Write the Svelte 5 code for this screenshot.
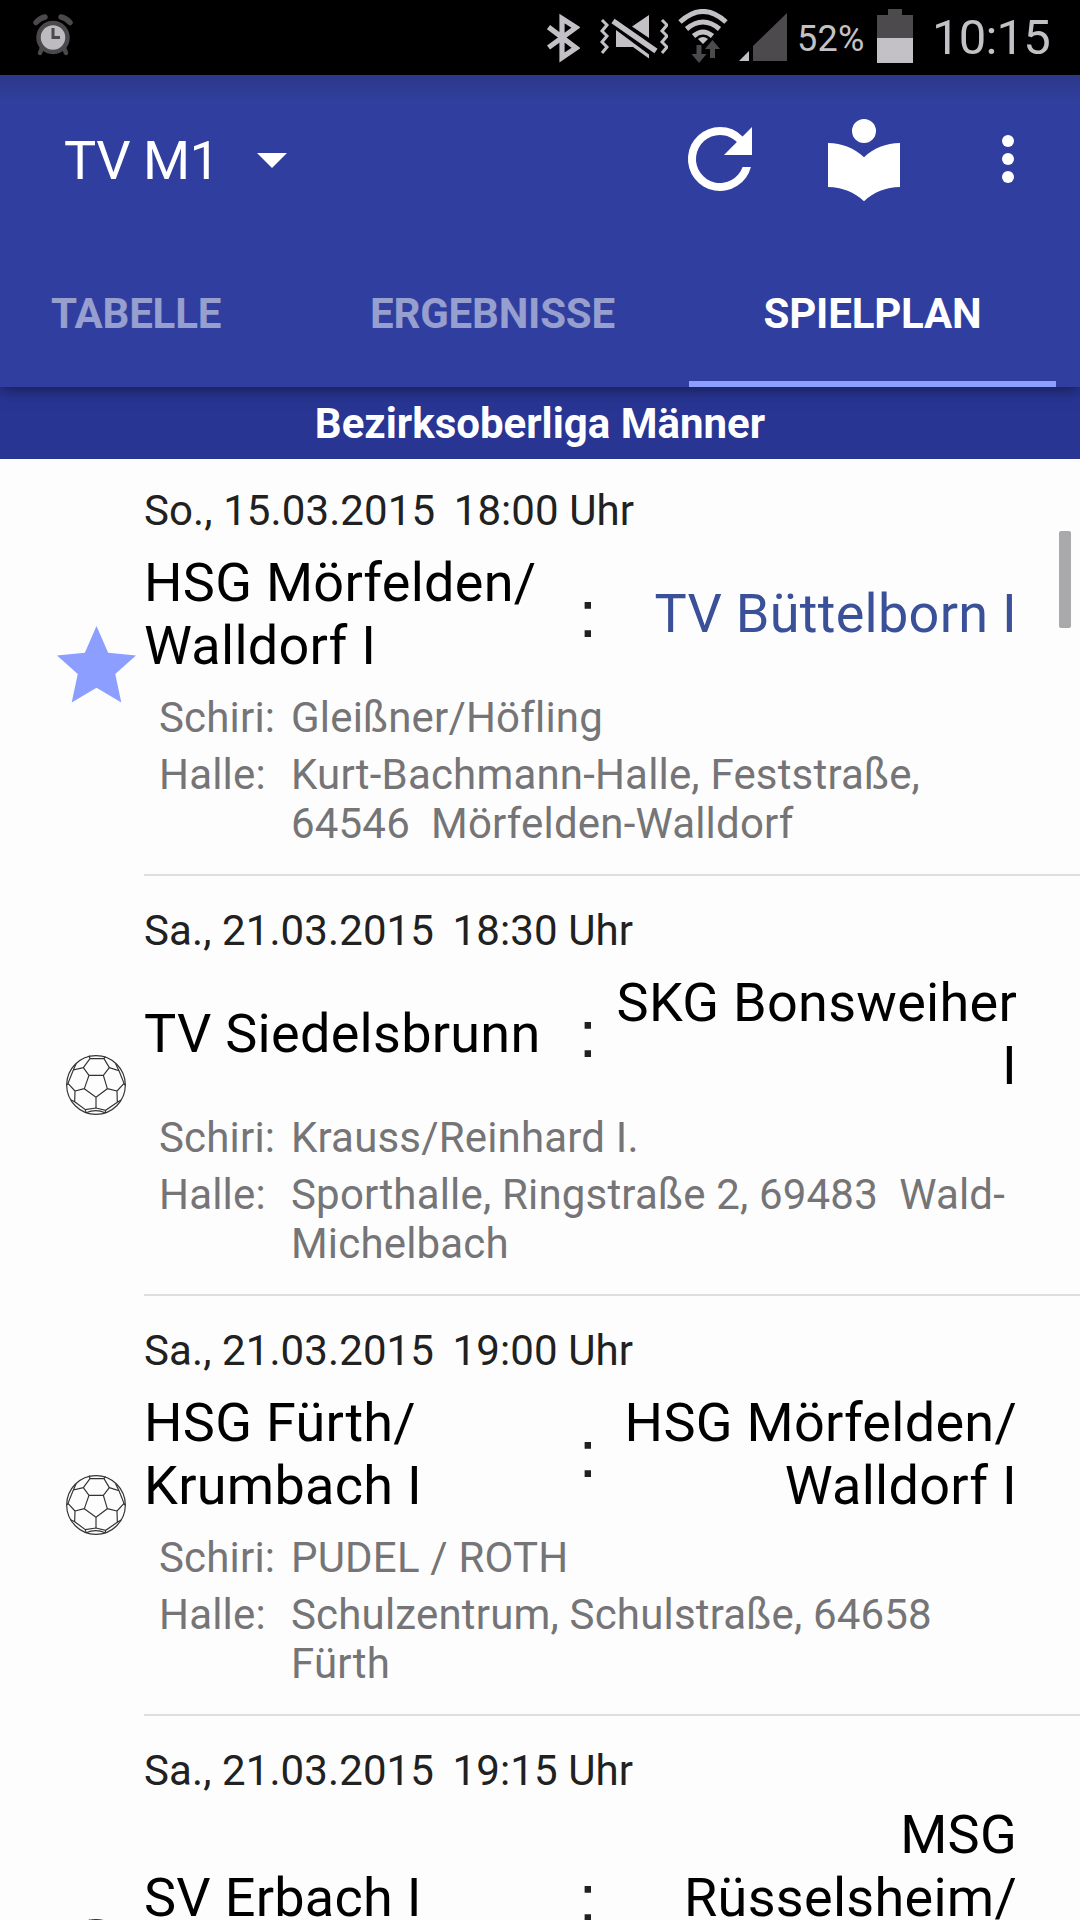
<script lang="ts">
  interface Game {
    kind: 'star' | 'ball';
    date: string;
    time: string;
    home: string[];
    guest: string[];
    own?: boolean;
    referee: string;
    hall: string[];
  }

  const tabs = ['TABELLE', 'ERGEBNISSE', 'SPIELPLAN'];
  let active = $state('SPIELPLAN');

  const games: Game[] = [
    {
      kind: 'star',
      date: 'So., 15.03.2015',
      time: '18:00 Uhr',
      home: ['HSG Mörfelden/', 'Walldorf I'],
      guest: ['TV Büttelborn I'],
      own: true,
      referee: 'Gleißner/Höfling',
      hall: ['Kurt-Bachmann-Halle, Feststraße,', '64546  Mörfelden-Walldorf']
    },
    {
      kind: 'ball',
      date: 'Sa., 21.03.2015',
      time: '18:30 Uhr',
      home: ['TV Siedelsbrunn'],
      guest: ['SKG Bonsweiher', 'I'],
      referee: 'Krauss/Reinhard I.',
      hall: ['Sporthalle, Ringstraße 2, 69483  Wald-', 'Michelbach']
    },
    {
      kind: 'ball',
      date: 'Sa., 21.03.2015',
      time: '19:00 Uhr',
      home: ['HSG Fürth/', 'Krumbach I'],
      guest: ['HSG Mörfelden/', 'Walldorf I'],
      referee: 'PUDEL / ROTH',
      hall: ['Schulzentrum, Schulstraße, 64658', 'Fürth']
    },
    {
      kind: 'ball',
      date: 'Sa., 21.03.2015',
      time: '19:15 Uhr',
      home: ['SV Erbach I'],
      guest: ['MSG', 'Rüsselsheim/', 'Bauschheim I'],
      referee: '',
      hall: []
    }
  ];
</script>

<div class="screen">
  <div class="status">
    <svg class="alarm" width="40" height="42" viewBox="0 0 40 42">
      <g stroke="#4b494c" stroke-linecap="round" fill="none">
        <path d="M3 8.500 Q7 4 12 3M37 8.500 Q33 4 28 3" stroke-width="5.500" />
        <path d="M9 34 L7 39M31 34 L33 39" stroke-width="4.500" />
      </g>
      <circle cx="20" cy="23.500" r="14.500" fill="#bdbbbf" stroke="#4b494c" stroke-width="4.500" />
      <path d="M20 14v9.500h7" fill="none" stroke="#4b494c" stroke-width="3" />
    </svg>
    <div class="status-icons">
      <svg width="33" height="50" viewBox="0 0 33 50">
        <path d="M1.500 14 L29 35 L15 44.500 V5.500 L29 14.500 L1.500 34.500" fill="none" stroke="#c3c1c5" stroke-width="5.200" />
      </svg>
      <svg class="mute" width="68" height="50" viewBox="0 0 68 50">
        <g fill="none" stroke="#c3c1c5">
          <path d="M2 7l5 5-5 6 5 5-5 6 5 5-5 6M62 7l5 5-5 6 5 5-5 6 5 5-5 6" stroke-width="3" />
          <path d="M13 8L56 38" stroke-width="5.500" />
        </g>
        <path d="M49 2v23L32 13.500zM16 17l33 24.500v4L33 34H16z" fill="#c3c1c5" />
      </svg>
      <svg class="wifi" width="50" height="54" viewBox="0 0 50 54">
        <g fill="none" stroke="#c3c1c5" stroke-width="5">
          <path d="M2 13 Q25 -8 48 13M8.500 20 Q25 6 41.500 20M15.500 27 Q25 19 34.500 27" />
        </g>
        <path d="M20 30 Q25 26 30 30 L25 35z" fill="#c3c1c5" />
        <path d="M18.500 36h5v9h5l-7.500 9-7.500-9h5zM32 49h5v-9h5l-7.500-9-7.500 9h5z" fill="#4c4a4d" />
      </svg>
      <svg class="signal" width="48" height="49" viewBox="0 0 48 49">
        <path d="M48 0v48H14V33z" fill="#4c4a4d" />
        <path d="M10 38v10H0z" fill="#c3c1c5" />
      </svg>
      <span class="percent">52%</span>
      <svg class="battery" width="36" height="54" viewBox="0 0 36 54">
        <path d="M11 0h14v6h11v24H0V6h11z" fill="#4c4a4d" />
        <path d="M0 29h36v25H0z" fill="#c3c1c5" />
      </svg>
      <span class="clock">10:15</span>
    </div>
  </div>

  <header>
    <div class="toolbar">
      <button class="team-select">
        <span>TV M1</span>
        <svg width="30" height="15" viewBox="0 0 30 15"><path d="M0 0h30L15 15z" fill="#fff" /></svg>
      </button>
      <div class="actions">
        <svg width="96" height="96" viewBox="0 0 24 24" fill="#fff">
          <path d="M17.650 6.350A7.960 7.960 0 0 0 12 4a8 8 0 1 0 7.730 10h-2.080A6 6 0 1 1 12 6c1.660 0 3.140.69 4.220 1.780L13 11h7V4z" />
        </svg>
        <svg class="reader" width="96" height="96" viewBox="0 0 24 24" fill="#fff">
          <path d="M12 11.550C9.640 9.350 6.480 8 3 8v11c3.480 0 6.640 1.350 9 3.550 2.360-2.190 5.520-3.550 9-3.550V8c-3.480 0-6.640 1.350-9 3.550zM12 8a3 3 0 1 0 0-6 3 3 0 0 0 0 6z" />
        </svg>
        <svg class="more" width="12" height="48" viewBox="0 0 12 48" fill="#fff">
          <circle cx="6" cy="6" r="6" />
          <circle cx="6" cy="24" r="6" />
          <circle cx="6" cy="42" r="6" />
        </svg>
      </div>
    </div>
    <nav>
      {#each tabs as tab}
        <button class="tab" class:active={tab === active} onclick={() => (active = tab)}>{tab}</button>
      {/each}
    </nav>
  </header>

  <h1>Bezirksoberliga Männer</h1>

  <main>
    {#each games as game}
      <article>
        <div class="badge">
          {#if game.kind === 'star'}
            <svg width="79" height="77" viewBox="0 0 78 76">
              <path d="M39 0l11.500 26.500L78 29 57.500 47.500 63.500 75.500 39 61 14.500 75.500 20.500 47.500 0 29l27.500-2.500z" fill="#8c9eff" />
            </svg>
          {:else}
            <svg width="60" height="60" viewBox="0 0 180 180" fill="none" stroke="#333" stroke-width="3.500">
              <circle cx="90" cy="90" r="88" />
              <path d="M69 61h43l12 40-34 26-35-26zM69 61L52 38M112 61l18-23M124 101l29 7M55 101l-28 7M90 127v32" />
              <path d="M52 38l20-27h42l16 27M72 11l-2-9M114 11l4-7M52 38L22 45 6 85l21 23-1 32M22 45l8-18M130 38l29 9 15 38-21 23 1 34M159 47l-10-20M6 85l-4 5M174 85l4 6M26 140l32 24 32-5 29 7 35-24M26 140l-12-6M154 142l11-7M58 164l2 9M119 166l-2 9M60 173q30-12 57 0" />
            </svg>
          {/if}
        </div>
        <div class="game">
          <p class="date"><span>{game.date}</span> <span>{game.time}</span></p>
          <div class="teams">
            <div class="team">
              {#each game.home as line}<div>{line}</div>{/each}
            </div>
            <span class="colon">:</span>
            <div class="team guest" class:own={game.own}>
              {#each game.guest as line}<div>{line}</div>{/each}
            </div>
          </div>
          {#if game.referee}
            <dl>
              <dt>Schiri:</dt>
              <dd>{game.referee}</dd>
              <dt>Halle:</dt>
              <dd>
                {#each game.hall as line}<div>{line}</div>{/each}
              </dd>
            </dl>
          {/if}
        </div>
      </article>
    {/each}
    <div class="scrollbar"></div>
  </main>
</div>

<style>
  :global(body) { margin: 0; background: #fdfdfd; }
  .screen {
    width: 1080px;
    height: 1920px;
    overflow: hidden;
    display: flex;
    flex-direction: column;
    background: #fdfdfd;
    font-family: Roboto, sans-serif;
  }
  button {
    font: inherit;
    color: inherit;
    background: none;
    border: none;
    padding: 0;
    box-sizing: border-box;
  }
  svg { display: block; flex: none; }

  .status {
    height: 75px;
    flex: none;
    box-sizing: border-box;
    padding: 0 30px 0 33px;
    background: #000;
    color: #c3c1c5;
    display: flex;
    justify-content: space-between;
  }
  .alarm { margin-top: 14px; }
  .status-icons { display: flex; align-items: flex-start; padding-top: 9px; }
  .status-icons svg:first-child { margin-top: 4px; }
  .mute { margin: 4px 0 0 20px; }
  .wifi { margin: 0 0 0 10px; }
  .signal { margin: 4px 0 0 11px; }
  .percent { font-size: 36px; line-height: 60px; margin-left: 10px; width: 66px; letter-spacing: 0.3px; }
  .battery { margin-left: 14px; }
  .clock { font-size: 49px; line-height: 58px; margin-left: 19px; letter-spacing: -0.8px; }

  header {
    height: 312px;
    flex: none;
    background: linear-gradient(#2d3888, #303f9f 28px);
    color: #fff;
    display: flex;
    flex-direction: column;
    position: relative;
    box-shadow: 0 2px 14px rgba(0, 0, 0, 0.5);
  }
  .toolbar {
    height: 168px;
    display: flex;
    align-items: center;
    justify-content: space-between;
    padding: 0 66px 0 64px;
  }
  .team-select {
    display: flex;
    align-items: center;
    gap: 38px;
    padding-top: 2px;
    font-size: 54px;
    letter-spacing: -0.5px;
  }
  .actions { display: flex; align-items: center; }
  .reader { margin-left: 48px; }
  .more { margin-left: 90px; }
  nav { flex: 1; display: flex; padding: 0 24px 0 0; }
  .tab {
    font-size: 42px;
    font-weight: 700;
    letter-spacing: -0.2px;
    color: rgba(255, 255, 255, 0.5);
    padding: 0 0 4px;
  }
  .tab:nth-child(1) { width: 272px; }
  .tab:nth-child(2) { width: 417px; padding-left: 24px; }
  .tab:nth-child(3) { width: 367px; }
  .tab.active { color: #fff; box-shadow: inset 0 -6px #8c9eff; }

  h1 {
    height: 72px;
    flex: none;
    margin: 0;
    font-size: 42px;
    line-height: 74px;
    font-weight: 700;
    text-align: center;
    color: #fff;
    background: #283593;
  }

  main { position: relative; }
  article { display: flex; height: 417px; margin-bottom: 3px; }
  article:last-of-type { height: 465px; }
  .badge {
    width: 144px;
    flex: none;
    display: flex;
    align-items: center;
    justify-content: center;
    padding: 0 0 6px 48px;
    box-sizing: border-box;
  }
  .game { flex: 1; border-bottom: 2px solid #dedde0; }
  .date {
    margin: 27px 0 8px;
    font-size: 42px;
    line-height: 49px;
    letter-spacing: 0.1px;
    color: #212121;
  }
  .date span + span { margin-left: 8px; }
  .teams {
    display: flex;
    align-items: center;
    min-height: 141px;
    width: 873px;
    font-size: 54px;
    line-height: 63px;
    letter-spacing: 0.28px;
    color: #000;
  }
  .team { width: 424px; white-space: nowrap; }
  .colon {
    width: 40px;
    text-align: center;
    font-family: "Liberation Sans", sans-serif;
    font-size: 67px;
    color: #212121;
  }
  .guest { flex: 1; text-align: right; }
  .own { color: #3a5199; }
  dl {
    display: grid;
    grid-template-columns: 132px 1fr;
    row-gap: 8px;
    margin: 9px 0 0 15px;
    font-size: 42px;
    line-height: 49px;
    letter-spacing: 0.18px;
    color: #757477;
  }
  dd { margin: 0; white-space: pre; }
  .scrollbar {
    position: absolute;
    top: 72px;
    right: 9px;
    width: 12px;
    height: 97px;
    border-radius: 2px;
    background: #a9a8aa;
  }
</style>
